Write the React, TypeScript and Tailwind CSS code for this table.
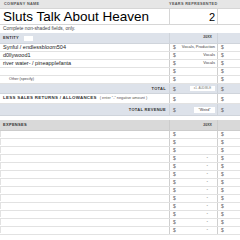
import React from "react";

const dollarRows = 13;

function Cells({
  left,
  mid,
  right,
  h,
  shade,
}: {
  left?: React.ReactNode;
  mid?: React.ReactNode;
  right?: React.ReactNode;
  h: string;
  shade?: string;
}) {
  return (
    <div className={`flex ${h} ${shade ?? "bg-white"} border-b border-[#e2e2e2]`}>
      <div className="w-[169px] flex items-end pb-[1px] overflow-hidden whitespace-nowrap">{left}</div>
      <div className="w-[48px] flex items-end pb-[1px] border-l border-[#cfcfcf] overflow-hidden whitespace-nowrap">{mid}</div>
      <div className="flex-1 flex items-end pb-[1px] border-l border-[#cfcfcf] overflow-hidden whitespace-nowrap">{right}</div>
    </div>
  );
}

const Dollar = () => <span className="pl-[3px] text-[5px] leading-[6px] text-[#666]">$</span>;

export default function App() {
  const entities = [
    { name: "Synful / endlessbloom504", role: "Vocals, Production" },
    { name: "d0llywood1", role: "Vocals" },
    { name: "river water- / pineapplefanta", role: "Vocals" },
    { name: "", role: "" },
  ];

  return (
    <div className="w-[240px] h-[240px] overflow-hidden bg-white font-['Liberation_Sans',Arial,sans-serif] text-[#222]">
      {/* header */}
      <div className="flex h-[9px] bg-[#e6e6e6] border-b border-[#d6d6d6]">
        <div className="w-[169px] pl-[4px] text-[3.8px] font-bold leading-[9px] tracking-[0.35px] text-[#555]">COMPANY NAME</div>
        <div className="w-[48px] text-center text-[3.8px] font-bold leading-[9px] tracking-[0.35px] text-[#555] whitespace-nowrap">YEARS REPRESENTED</div>
        <div className="flex-1" />
      </div>
      <div className="flex h-[16px] border-b border-[#d6d6d6]">
        <div className="w-[169px] pl-[3px] text-[13.5px] leading-[16px] text-black">Sluts Talk About Heaven</div>
        <div className="w-[48px] border-l border-[#d6d6d6] text-right pr-[2px] text-[11px] leading-[16px] text-black">2</div>
        <div className="flex-1 border-l border-[#d6d6d6]" />
      </div>
      <div className="h-[8px] pl-[3px] text-[4.8px] leading-[8px] text-[#444]">Complete non-shaded fields, only.</div>

      {/* entity section */}
      <div className="flex h-[11px] bg-[#dde2ea] border-b border-[#cfd4db]">
        <div className="w-[169px] flex items-center pl-[3px] gap-[5px]">
          <span className="text-[4px] font-bold tracking-[0.3px] text-[#333]">ENTITY</span>
          <span className="w-[9px] h-[5px] bg-white" />
        </div>
        <div className="w-[48px] flex items-center justify-end pr-[5px] border-l border-[#cfd4db] text-[3.6px] font-bold text-[#444]">20XX</div>
        <div className="flex-1 border-l border-[#cfd4db]" />
      </div>
      {entities.map((e, i) => (
        <Cells
          key={i}
          h="h-[8px]"
          left={<span className="pl-[3px] text-[5.5px] leading-[6px]">{e.name}</span>}
          mid={
            <div className="flex w-full justify-between pr-[2px] text-[4px] leading-[6px] text-[#444]">
              <Dollar />
              <span>{e.role}</span>
            </div>
          }
          right={<Dollar />}
        />
      ))}
      <Cells
        h="h-[8px]"
        left={<span className="pl-[9px] text-[3.8px] leading-[6px] text-[#444]">Other (specify)</span>}
        mid={<Dollar />}
        right={<Dollar />}
      />
      <div className="flex h-[10px] bg-[#dde2ea] border-b border-[#cfd4db]">
        <div className="w-[169px] flex items-center justify-end pr-[3px] text-[4px] font-bold tracking-[0.3px] text-[#333]">TOTAL</div>
        <div className="w-[48px] flex items-center justify-between pr-[2px] border-l border-[#cfd4db]">
          <Dollar />
          <span className="w-[25px] h-[5px] bg-white text-[3px] leading-[5px] text-center text-[#777]">x1. AUDIBLE</span>
        </div>
        <div className="flex-1 flex items-center border-l border-[#cfd4db]">
          <Dollar />
        </div>
      </div>
      <Cells
        h="h-[10px]"
        left={
          <span className="pl-[3px] text-[4.4px] leading-[6px] pb-[1px]">
            <b className="tracking-[0.3px] text-[#333]">LESS SALES RETURNS / ALLOWANCES</b>
            <span className="ml-[3px] text-[3.8px] text-[#555]">( enter "-" negative amount )</span>
          </span>
        }
        mid={<Dollar />}
        right={<Dollar />}
      />
      <div className="flex h-[12px] bg-[#dde2ea] border-b border-[#cfd4db]">
        <div className="w-[169px] flex items-center justify-end pr-[3px] text-[4px] font-bold tracking-[0.3px] text-[#333]">TOTAL REVENUE</div>
        <div className="w-[48px] flex items-center justify-between pr-[2px] border-l border-[#cfd4db]">
          <Dollar />
          <span className="w-[21px] h-[6px] bg-white text-[3.6px] leading-[6px] text-center text-[#333]">"Weird"</span>
        </div>
        <div className="flex-1 flex items-center border-l border-[#cfd4db]">
          <Dollar />
        </div>
      </div>
      <div className="h-[4px]" />

      {/* expenses */}
      <div className="flex h-[11px] bg-[#d9d9d9] border-b border-[#cccccc]">
        <div className="w-[169px] flex items-end pb-[2px] pl-[3px] text-[4px] font-bold tracking-[0.3px] text-[#333]">EXPENSES</div>
        <div className="w-[48px] flex items-end pb-[2px] justify-end pr-[5px] border-l border-[#cccccc] text-[3.6px] font-bold text-[#444]">20XX</div>
        <div className="flex-1 border-l border-[#cccccc]" />
      </div>
      {Array.from({ length: dollarRows }).map((_, i) => (
        <Cells
          key={i}
          h="h-[8px]"
          left={<span className="h-full border-l border-[#e2e2e2]" />}
          mid={
            <div className="flex w-full justify-between pr-[9px] text-[4.5px] leading-[6px] text-[#666]">
              <Dollar />
              <span>{i >= 3 ? "-" : ""}</span>
            </div>
          }
          right={<Dollar />}
        />
      ))}
    </div>
  );
}
